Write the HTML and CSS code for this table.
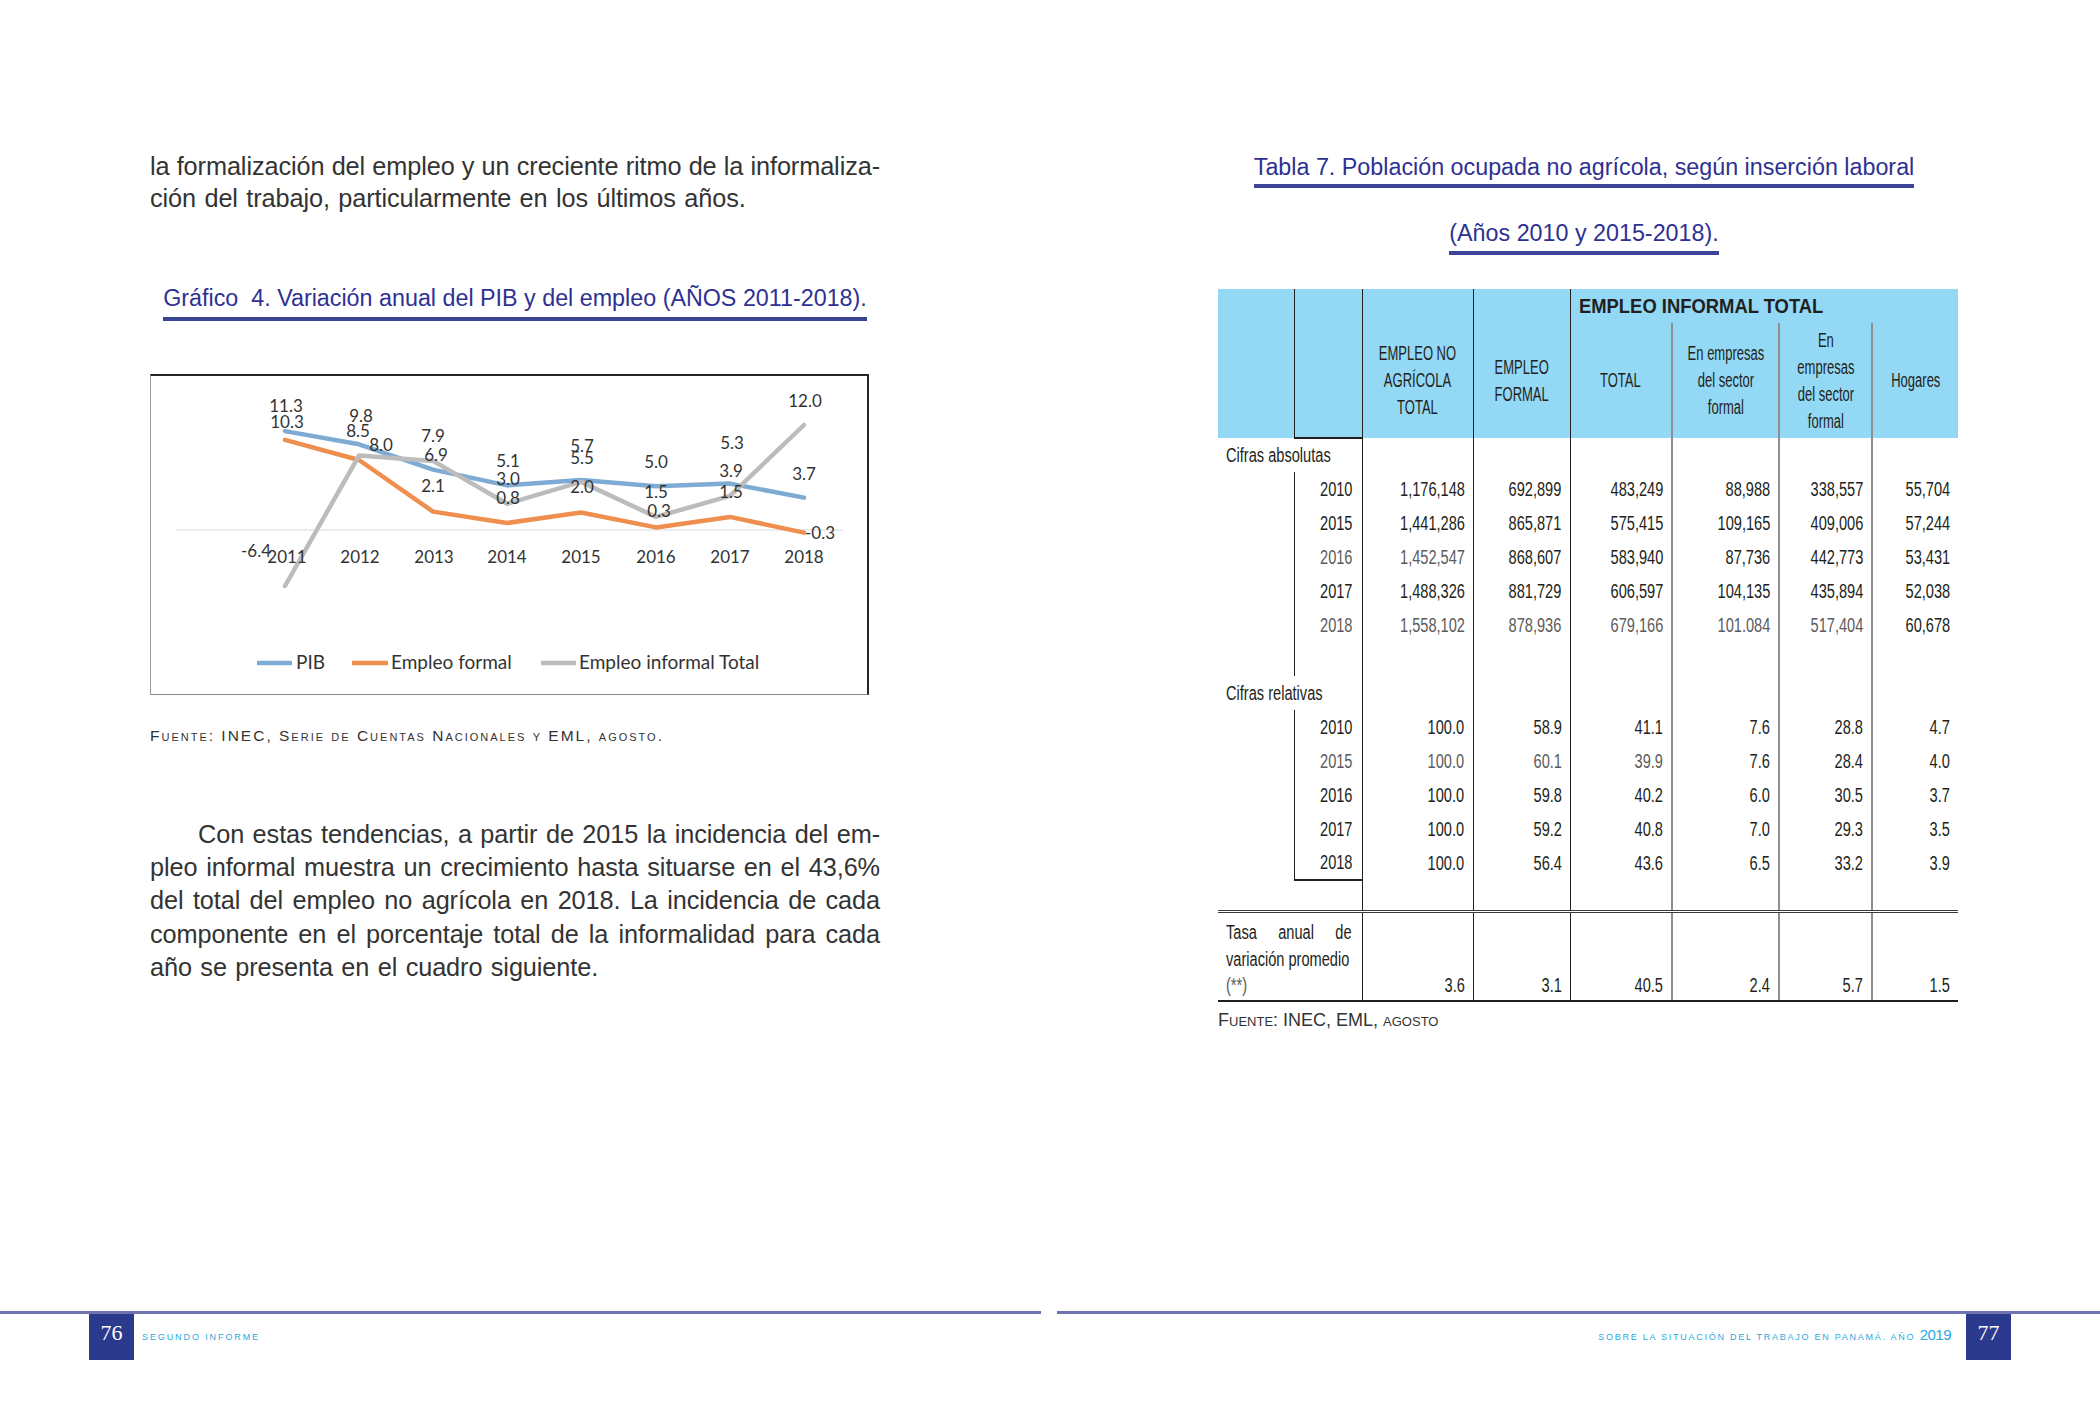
FILE: index.html
```html
<!DOCTYPE html>
<html lang="es">
<head>
<meta charset="utf-8">
<title>Segundo informe – páginas 76-77</title>
<link rel="stylesheet" href="styles.css">
</head>
<body>
<div class="spread">
  <section class="page page-left">
    <div class="content">
      <p class="para p1">
        <span class="jl">la formalización del empleo y un creciente ritmo de la informaliza-</span>
        <span class="ll">ción del trabajo, particularmente en los últimos años.</span>
      </p>
      <h2 class="ttl cap"><span>Gráfico&nbsp; 4. Variación anual del PIB y del empleo (AÑOS 2011-2018).</span></h2>
      <figure class="chart">
        <svg class="chart-svg" width="716" height="318" viewBox="1 2 716 318">
          <line x1="26" y1="156" x2="693" y2="156" class="axis"/>
          <polyline class="s-pib" points="135,57.1 209,70.3 283,95.6 357,111.4 431,106.1 506,112.3 580,109.6 654,123.6"/>
          <polyline class="s-for" points="135,65.9 209,86 283,137.6 357,149 431,138.5 506,153.4 580,142.9 654,158.6"/>
          <polyline class="s-inf" points="135,212 209,81.6 283,86.9 357,129.8 431,107.9 506,142.9 580,121.9 654,51"/>
          <g class="lbl">
            <text x="136" y="38">11.3</text>
            <text x="137" y="54">10.3</text>
            <text x="211" y="48">9.8</text>
            <text x="208" y="63">8.5</text>
            <text x="231" y="77">8.0</text>
            <text x="283" y="68">7.9</text>
            <text x="286" y="87">6.9</text>
            <text x="283" y="118">2.1</text>
            <text x="358" y="93">5.1</text>
            <text x="358" y="111">3.0</text>
            <text x="358" y="130">0.8</text>
            <text x="432" y="78">5.7</text>
            <text x="432" y="90">5.5</text>
            <text x="432" y="119">2.0</text>
            <text x="506" y="94">5.0</text>
            <text x="506" y="124">1.5</text>
            <text x="509" y="143">0.3</text>
            <text x="582" y="75">5.3</text>
            <text x="581" y="103">3.9</text>
            <text x="581" y="124">1.5</text>
            <text x="655" y="33">12.0</text>
            <text x="654" y="106">3.7</text>
            <text x="670" y="165">-0.3</text>
            <text x="106" y="183">-6.4</text>
          </g>
          <g class="lbl yrs">
            <text x="137" y="189">2011</text>
            <text x="210" y="189">2012</text>
            <text x="284" y="189">2013</text>
            <text x="357" y="189">2014</text>
            <text x="431" y="189">2015</text>
            <text x="506" y="189">2016</text>
            <text x="580" y="189">2017</text>
            <text x="654" y="189">2018</text>
          </g>
          <g class="legend">
            <line x1="107" y1="289" x2="142" y2="289" class="k-pib"/>
            <text x="146" y="295">PIB</text>
            <line x1="202" y1="289" x2="238" y2="289" class="k-for"/>
            <text x="241" y="295">Empleo formal</text>
            <line x1="391" y1="289" x2="426" y2="289" class="k-inf"/>
            <text x="429" y="295">Empleo informal Total</text>
          </g>
        </svg>
      </figure>
      <p class="source src-left">Fuente: INEC, Serie de Cuentas Nacionales y EML, agosto.</p>
      <p class="para p2">
        <span class="jl ind">Con estas tendencias, a partir de 2015 la incidencia del em-</span>
        <span class="jl">pleo informal muestra un crecimiento hasta situarse en el 43,6%</span>
        <span class="jl">del total del empleo no agrícola en 2018. La incidencia de cada</span>
        <span class="jl">componente en el porcentaje total de la informalidad para cada</span>
        <span class="ll">año se presenta en el cuadro siguiente.</span>
      </p>
    </div>
    <footer class="foot foot-left">
      <span class="pnum">76</span>
      <span class="ftext">SEGUNDO INFORME</span>
    </footer>
  </section>

  <section class="page page-right">
    <div class="content">
      <h2 class="ttl t1"><span>Tabla 7. Población ocupada no agrícola, según inserción laboral</span></h2>
      <h2 class="ttl t2"><span>(Años 2010 y 2015-2018).</span></h2>
      <table class="tbl">
        <colgroup>
          <col class="w-a"><col class="w-b"><col class="w-c"><col class="w-d">
          <col class="w-e"><col class="w-f"><col class="w-g"><col class="w-h">
        </colgroup>
        <thead>
          <tr class="h1">
            <th rowspan="2" class="a"></th>
            <th rowspan="2" class="b"></th>
            <th rowspan="2" class="c span"><div class="hc"><span class="hn">EMPLEO NO<br>AGRÍCOLA<br>TOTAL</span></div></th>
            <th rowspan="2" class="d span"><div class="hc"><span class="hn">EMPLEO<br>FORMAL</span></div></th>
            <th colspan="4" class="e inf"><span class="hb">EMPLEO INFORMAL TOTAL</span></th>
          </tr>
          <tr class="h2">
            <th class="e"><div class="hc"><span class="hn">TOTAL</span></div></th>
            <th class="f"><div class="hc"><span class="hn">En empresas<br>del sector<br>formal</span></div></th>
            <th class="g"><div class="hc"><span class="hn">En<br>empresas<br>del sector<br>formal</span></div></th>
            <th class="h"><div class="hc"><span class="hn">Hogares</span></div></th>
          </tr>
        </thead>
        <tbody>
          <tr class="sec">
            <td colspan="2" class="lab"><span class="n nl">Cifras absolutas</span></td>
            <td class="c"></td><td class="d"></td><td class="e"></td><td class="f"></td><td class="g"></td><td class="h"></td>
          </tr>
          <tr>
            <td class="a"></td><td class="b yr"><span class="n">2010</span></td>
            <td class="c"><span class="n">1,176,148</span></td><td class="d"><span class="n">692,899</span></td><td class="e"><span class="n">483,249</span></td><td class="f"><span class="n">88,988</span></td><td class="g"><span class="n">338,557</span></td><td class="h"><span class="n">55,704</span></td>
          </tr>
          <tr>
            <td class="a"></td><td class="b yr"><span class="n">2015</span></td>
            <td class="c"><span class="n">1,441,286</span></td><td class="d"><span class="n">865,871</span></td><td class="e"><span class="n">575,415</span></td><td class="f"><span class="n">109,165</span></td><td class="g"><span class="n">409,006</span></td><td class="h"><span class="n">57,244</span></td>
          </tr>
          <tr>
            <td class="a"></td><td class="b yr lt"><span class="n">2016</span></td>
            <td class="c lt"><span class="n">1,452,547</span></td><td class="d"><span class="n">868,607</span></td><td class="e"><span class="n">583,940</span></td><td class="f"><span class="n">87,736</span></td><td class="g"><span class="n">442,773</span></td><td class="h"><span class="n">53,431</span></td>
          </tr>
          <tr>
            <td class="a"></td><td class="b yr"><span class="n">2017</span></td>
            <td class="c"><span class="n">1,488,326</span></td><td class="d"><span class="n">881,729</span></td><td class="e"><span class="n">606,597</span></td><td class="f"><span class="n">104,135</span></td><td class="g"><span class="n">435,894</span></td><td class="h"><span class="n">52,038</span></td>
          </tr>
          <tr>
            <td class="a"></td><td class="b yr lt"><span class="n">2018</span></td>
            <td class="c lt"><span class="n">1,558,102</span></td><td class="d lt"><span class="n">878,936</span></td><td class="e lt"><span class="n">679,166</span></td><td class="f lt"><span class="n">101.084</span></td><td class="g lt"><span class="n">517,404</span></td><td class="h"><span class="n">60,678</span></td>
          </tr>
          <tr>
            <td class="a"></td><td class="b yr"></td>
            <td class="c"></td><td class="d"></td><td class="e"></td><td class="f"></td><td class="g"></td><td class="h"></td>
          </tr>
          <tr class="sec">
            <td colspan="2" class="lab"><span class="n nl">Cifras relativas</span></td>
            <td class="c"></td><td class="d"></td><td class="e"></td><td class="f"></td><td class="g"></td><td class="h"></td>
          </tr>
          <tr>
            <td class="a"></td><td class="b yr"><span class="n">2010</span></td>
            <td class="c"><span class="n">100.0</span></td><td class="d"><span class="n">58.9</span></td><td class="e"><span class="n">41.1</span></td><td class="f"><span class="n">7.6</span></td><td class="g"><span class="n">28.8</span></td><td class="h"><span class="n">4.7</span></td>
          </tr>
          <tr>
            <td class="a"></td><td class="b yr lt"><span class="n">2015</span></td>
            <td class="c lt"><span class="n">100.0</span></td><td class="d lt"><span class="n">60.1</span></td><td class="e lt"><span class="n">39.9</span></td><td class="f"><span class="n">7.6</span></td><td class="g"><span class="n">28.4</span></td><td class="h"><span class="n">4.0</span></td>
          </tr>
          <tr>
            <td class="a"></td><td class="b yr"><span class="n">2016</span></td>
            <td class="c"><span class="n">100.0</span></td><td class="d"><span class="n">59.8</span></td><td class="e"><span class="n">40.2</span></td><td class="f"><span class="n">6.0</span></td><td class="g"><span class="n">30.5</span></td><td class="h"><span class="n">3.7</span></td>
          </tr>
          <tr>
            <td class="a"></td><td class="b yr"><span class="n">2017</span></td>
            <td class="c"><span class="n">100.0</span></td><td class="d"><span class="n">59.2</span></td><td class="e"><span class="n">40.8</span></td><td class="f"><span class="n">7.0</span></td><td class="g"><span class="n">29.3</span></td><td class="h"><span class="n">3.5</span></td>
          </tr>
          <tr>
            <td class="a"></td><td class="b yr last"><span class="n">2018</span></td>
            <td class="c"><span class="n">100.0</span></td><td class="d"><span class="n">56.4</span></td><td class="e"><span class="n">43.6</span></td><td class="f"><span class="n">6.5</span></td><td class="g"><span class="n">33.2</span></td><td class="h"><span class="n">3.9</span></td>
          </tr>
          <tr class="gap">
            <td class="a"></td><td class="b"></td>
            <td class="c"></td><td class="d"></td><td class="e"></td><td class="f"></td><td class="g"></td><td class="h"></td>
          </tr>
          <tr class="tasa">
            <td colspan="2" class="lab">
              <span class="tl">
                <span class="jl">Tasa anual de</span>
                <span class="ln">variación promedio</span>
                <span class="ln lt">(**)</span>
              </span>
            </td>
            <td class="c"><span class="n">3.6</span></td><td class="d"><span class="n">3.1</span></td><td class="e"><span class="n">40.5</span></td><td class="f"><span class="n">2.4</span></td><td class="g"><span class="n">5.7</span></td><td class="h"><span class="n">1.5</span></td>
          </tr>
        </tbody>
      </table>
      <p class="source src-right">Fuente: INEC, EML, agosto</p>
    </div>
    <footer class="foot foot-right">
      <span class="ftext">SOBRE LA SITUACIÓN DEL TRABAJO EN PANAMÁ. AÑO <span class="yr2019">2019</span></span>
      <span class="pnum">77</span>
    </footer>
  </section>
</div>
</body>
</html>
```

FILE: styles.css
```css
* { box-sizing: border-box; }
html, body { margin: 0; padding: 0; background: #ffffff; }
body {
  font-family: "Liberation Sans", Arial, sans-serif;
  color: #333333;
}

.spread { display: flex; width: 2100px; height: 1425px; }
.page { width: 1050px; height: 1425px; display: flex; flex-direction: column; }
.page-left .content { padding: 150px 170px 0 150px; }
.page-right .content { padding: 152px 142px 0 168px; }

/* body text */
.para { margin: 0; font-size: 25.3px; line-height: 32px; letter-spacing: -0.1px; color: #333333; }
.para .jl { display: block; text-align: justify; text-align-last: justify; }
.para .ll { display: block; text-align: left; word-spacing: 1.5px; }
.para .ind { padding-left: 48px; }
.p2 { margin-top: 72px; line-height: 33.2px; }

/* captions / titles */
.ttl {
  margin: 0;
  text-align: center;
  font-weight: normal;
  font-size: 23.3px;
  line-height: 30px;
  color: #2e3192;
}
.ttl span {
  display: inline-block;
  border-bottom: 4px solid #3b4496;
  padding-bottom: 2px;
}
.cap { margin-top: 70px; line-height: 28px; }
.cap span { padding-bottom: 5px; }
.t1 { padding-right: 8px; }
.t2 { margin-top: 30px; padding-right: 8px; }
.t2 span { padding-bottom: 3px; }

/* chart */
.chart {
  margin: 53px 0 0 0;
  width: 719px;
  height: 321px;
  border-top: 2px solid #262626;
  border-right: 2px solid #262626;
  border-left: 1px solid #9a9a9a;
  border-bottom: 1px solid #8a8a8a;
}
.chart-svg { display: block; }
.axis { stroke: #d9d9d9; stroke-width: 1; }
.s-pib, .s-for, .s-inf { fill: none; stroke-width: 4.5; stroke-linejoin: round; stroke-linecap: round; }
.s-pib { stroke: #7eabd3; }
.s-for { stroke: #ee8f4f; }
.s-inf { stroke: #bcbcbc; }
.lbl text { font-family: Lato, "Open Sans", sans-serif; font-size: 17px; fill: #333333; text-anchor: middle; }
.legend text { font-family: Lato, "Open Sans", sans-serif; font-size: 19px; fill: #333333; }
.legend line { stroke-width: 4.5; }
.k-pib { stroke: #7eabd3; }
.k-for { stroke: #ee8f4f; }
.k-inf { stroke: #bcbcbc; }

/* sources */
.source {
  margin: 0;
  font-variant: small-caps;
  color: #333333;
}
.src-left { margin-top: 31px; font-size: 15.5px; line-height: 20px; letter-spacing: 2px; }
.src-right { margin-top: 7px; font-size: 18px; line-height: 22px; }

/* table */
.tbl {
  margin-top: 34px;
  width: 740px;
  table-layout: fixed;
  border-collapse: collapse;
  color: #231f20;
}
.w-a { width: 76px; }
.w-b { width: 68px; }
.w-c { width: 111px; }
.w-d { width: 97px; }
.w-e { width: 102px; }
.w-f { width: 107px; }
.w-g { width: 93px; }
.w-h { width: 86px; }

.tbl th {
  background: #93d8f5;
  font-weight: normal;
  font-size: 20px;
  line-height: 27px;
  text-align: center;
  vertical-align: middle;
  padding: 0;
}
.tbl .hc { display: flex; justify-content: center; }
.tbl .hn {
  display: inline-block;
  white-space: nowrap;
  text-align: center;
  transform: scaleX(0.65);
}
.tbl .h1 { height: 34px; }
.tbl .h2 { height: 115px; }
.tbl th.span { padding-top: 34px; }
.tbl th.inf {
  text-align: left;
  padding-left: 8px;
  font-weight: bold;
  font-size: 20px;
}
.tbl .hb {
  display: inline-block;
  white-space: nowrap;
  transform: scaleX(0.92);
  transform-origin: left center;
}
.tbl thead th.b { border-left: 1px solid #231f20; border-bottom: 2px solid #231f20; }

.tbl td {
  font-size: 20px;
  line-height: 27px;
  height: 34px;
  padding: 0 8px 0 0;
  text-align: right;
  vertical-align: middle;
}
.tbl .n {
  display: inline-block;
  white-space: nowrap;
  transform: scaleX(0.73);
  transform-origin: right center;
}
.tbl .nl { transform-origin: left center; }
.tbl .c, .tbl .d, .tbl .e { border-left: 1px solid #231f20; }
.tbl .f, .tbl .g, .tbl .h { border-left: 2px solid #8e8e8e; }
.tbl .h1 .inf { border-left: 1px solid #231f20; }
.tbl td.yr { border-left: 1px solid #231f20; padding-right: 9px; }
.tbl td.last { border-bottom: 2px solid #231f20; }
.tbl td.lab { text-align: left; padding-left: 8px; white-space: nowrap; }
.tbl .lt { color: #5c5c5c; }
.tbl .gap td { height: 31px; }

.tbl .tasa td {
  height: 90px;
  border-top: 3px double #3a3a3a;
  border-bottom: 2px solid #231f20;
  vertical-align: bottom;
  padding-bottom: 1px;
  line-height: 26.7px;
}
.tbl .tasa td.lab { padding-right: 0; white-space: normal; }
.tbl .tl {
  display: block;
  width: 172px;
  transform: scaleX(0.73);
  transform-origin: left bottom;
}
.tbl .tl .jl { display: block; text-align: justify; text-align-last: justify; }
.tbl .tl .ln { display: block; white-space: nowrap; }

/* footers */
.foot {
  margin-top: auto;
  margin-bottom: 65px;
  border-top: 3px solid #6f74b0;
  display: flex;
  align-items: baseline;
}
.foot-left { margin-right: 9px; }
.foot-right { margin-left: 7px; justify-content: flex-end; }
.pnum {
  width: 45px;
  height: 46px;
  padding-top: 8px;
  background: #2b3a8c;
  color: #ffffff;
  font-family: "Liberation Serif", "Times New Roman", serif;
  font-size: 22px;
  line-height: 22px;
  text-align: center;
}
.foot-left .pnum { margin-left: 89px; }
.foot-right .pnum { margin-right: 89px; margin-left: 15px; }
.ftext {
  font-size: 9px;
  letter-spacing: 1.9px;
  color: #27aae1;
}
.foot-left .ftext { margin-left: 8px; }
.foot-right .ftext { letter-spacing: 1.75px; }
.yr2019 {
  font-size: 15px;
  letter-spacing: -0.5px;
}
```
